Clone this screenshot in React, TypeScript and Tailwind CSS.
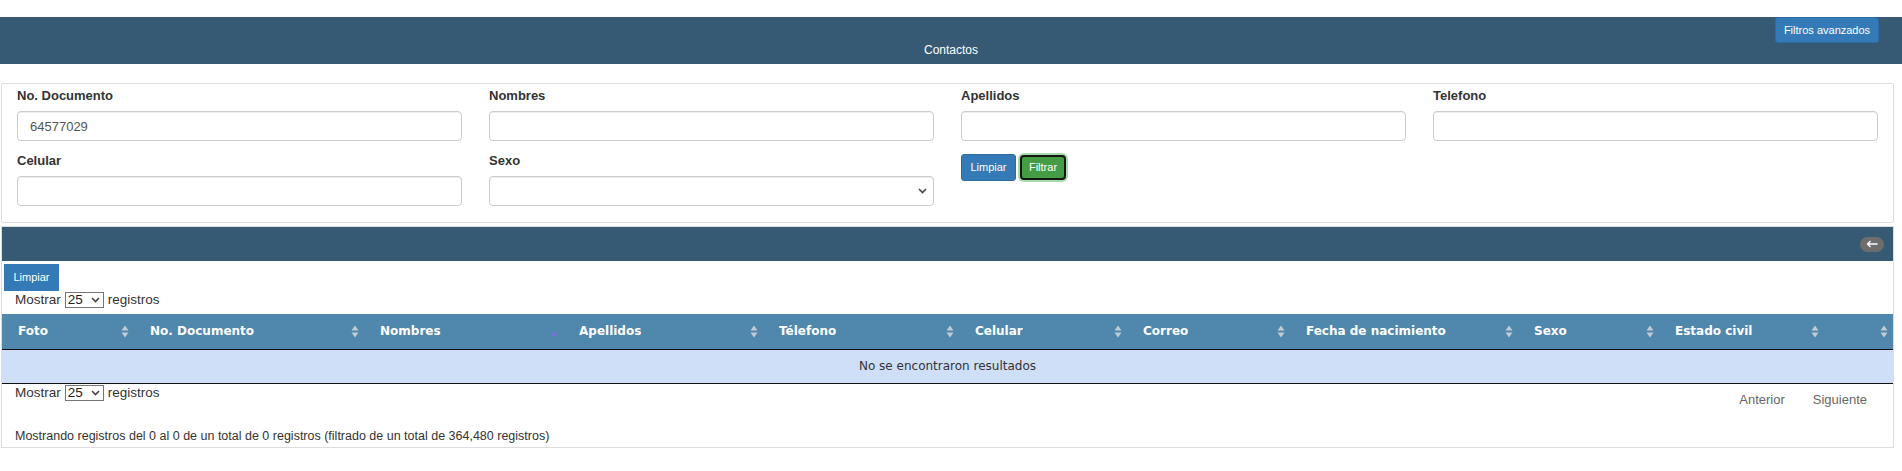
import { useState } from 'react'

const columns = [
  { label: 'Foto', width: 132 },
  { label: 'No. Documento', width: 230 },
  { label: 'Nombres', width: 199, sorted: true },
  { label: 'Apellidos', width: 200 },
  { label: 'Télefono', width: 196 },
  { label: 'Celular', width: 168 },
  { label: 'Correo', width: 163 },
  { label: 'Fecha de nacimiento', width: 228 },
  { label: 'Sexo', width: 141 },
  { label: 'Estado civil', width: 165 },
  { label: '', width: 68 },
]

function SortIcon({ sorted }: { sorted?: boolean }) {
  if (sorted) {
    return (
      <svg width="8" height="13" viewBox="0 0 8 13" className="shrink-0">
        <polygon points="0.5,8 7.5,8 4,12.5" fill="#7d70d9" />
      </svg>
    )
  }
  return (
    <svg width="8" height="13" viewBox="0 0 8 13" className="shrink-0">
      <polygon points="0.5,5.5 4,0.5 7.5,5.5" fill="#c2cad4" />
      <polygon points="0.5,7.5 4,12.5 7.5,7.5" fill="#c2cad4" />
    </svg>
  )
}

function Chevron({ className }: { className: string }) {
  return (
    <svg width="9" height="6" viewBox="0 0 9 6" className={className}>
      <path d="M1 1l3.5 3.5L8 1" fill="none" stroke="#444" strokeWidth="1.6" />
    </svg>
  )
}

function Field({ label, value }: { label: string; value?: string }) {
  const [text, setText] = useState(value ?? '')
  return (
    <label className="block">
      <span className="mb-[8px] block text-[13px] font-bold leading-[15px] text-[#333]">{label}</span>
      <input
        className="block h-[30px] w-full rounded-[4px] border border-[#ccc] px-[12px] text-[13px] text-[#555] shadow-[inset_0_1px_1px_rgba(0,0,0,0.075)] outline-none"
        value={text}
        onChange={(event) => setText(event.target.value)}
      />
    </label>
  )
}

function PageLength() {
  return (
    <div className="flex items-center text-[13.5px] leading-[16px] text-[#333]">
      <span>Mostrar</span>
      <div className="relative mx-[4px]">
        <select className="block h-[16px] w-[39px] appearance-none border border-[#767676] bg-white pl-[2px] text-[13.5px] leading-[14px] text-[#222] outline-none">
          <option>25</option>
          <option>50</option>
          <option>100</option>
        </select>
        <Chevron className="pointer-events-none absolute right-[4px] top-[5px]" />
      </div>
      <span>registros</span>
    </div>
  )
}

export default function App() {
  return (
    <div className="min-h-[471px] bg-white pt-[17px] font-['Liberation_Sans',Arial,sans-serif] text-[#333]">
      <header className="bg-[#365a74] pb-[7px]">
        <div className="flex justify-end pr-[23px]">
          <button className="h-[26px] w-[104px] rounded-[3px] border border-[#2e6da4] bg-[#337ab7] text-[11px] text-white">
            Filtros avanzados
          </button>
        </div>
        <h1 className="text-center text-[12px] leading-[14px] text-white">Contactos</h1>
      </header>

      <div className="pl-[1px] pr-[8px] pt-[19px]">
        <section className="rounded-[2px] border border-[#ddd] px-[15px] pb-[16px] pt-[4px]">
          <div className="grid grid-cols-4 gap-x-[27px] gap-y-[12px]">
            <Field label="No. Documento" value="64577029" />
            <Field label="Nombres" />
            <Field label="Apellidos" />
            <Field label="Telefono" />
            <Field label="Celular" />
            <label className="block">
              <span className="mb-[8px] block text-[13px] font-bold leading-[15px] text-[#333]">Sexo</span>
              <div className="relative">
                <select className="block h-[30px] w-full appearance-none rounded-[4px] border border-[#ccc] bg-white px-[12px] text-[13px] text-[#555] shadow-[inset_0_1px_1px_rgba(0,0,0,0.075)] outline-none">
                  <option></option>
                  <option>Masculino</option>
                  <option>Femenino</option>
                </select>
                <Chevron className="pointer-events-none absolute right-[7px] top-[12px]" />
              </div>
            </label>
            <div className="flex items-start pt-[1px]">
              <button className="h-[27px] w-[55px] rounded-[3px] border border-[#2e6da4] bg-[#337ab7] text-[11px] text-white">
                Limpiar
              </button>
              <button className="ml-[4px] mt-[1px] h-[25px] w-[46px] rounded-[4px] border-2 border-[#151515] bg-[#449d44] text-[11px] text-white ring-2 ring-[#a6dbae]">
                Filtrar
              </button>
            </div>
          </div>
        </section>

        <section className="mt-[3px] border border-[#ddd] pb-[3px]">
          <div className="flex h-[34px] items-center justify-end bg-[#365a74] pr-[9px]">
            <button className="flex h-[15px] w-[24px] items-center justify-center rounded-full bg-[#6d6d6d]">
              <svg width="12" height="8" viewBox="0 0 12 8">
                <path d="M11.5 4H1.5M4.5 1L1.5 4l3 3" fill="none" stroke="#fff" strokeWidth="1.3" />
              </svg>
            </button>
          </div>
          <button className="ml-[2px] mt-[3px] block h-[27px] w-[55px] bg-[#337ab7] text-[11px] text-white">Limpiar</button>
          <div className="pl-[13px] pt-[1px]">
            <PageLength />
          </div>

          <table className="mt-[6px] w-full table-fixed border-collapse font-['DejaVu_Sans',Verdana,sans-serif] text-[12px]">
            <colgroup>
              {columns.map((col, i) => (
                <col key={i} style={i < columns.length - 1 ? { width: col.width } : undefined} />
              ))}
            </colgroup>
            <thead>
              <tr className="bg-[#4f87ad]">
                {columns.map((col, i) => (
                  <th
                    key={i}
                    className="h-[35px] border-b border-[#111] pl-[16px] pr-[5px] text-left font-bold text-white"
                  >
                    <div className="flex items-center justify-between">
                      <span className="truncate">{col.label}</span>
                      <SortIcon sorted={col.sorted} />
                    </div>
                  </th>
                ))}
              </tr>
            </thead>
            <tbody>
              <tr className="bg-[#cfdff7]">
                <td colSpan={columns.length} className="h-[34px] border-b border-[#111] text-center text-[#333]">
                  No se encontraron resultados
                </td>
              </tr>
            </tbody>
          </table>

          <div className="flex items-start justify-between pl-[13px] pt-[1px]">
            <PageLength />
            <div className="flex pr-[13px] pt-[7px] text-[13px] leading-[16px] text-[#666]">
              <span className="px-[13px]">Anterior</span>
              <span className="ml-[2px] px-[13px]">Siguiente</span>
            </div>
          </div>
          <p className="mt-[20px] pl-[13px] text-[12.5px] leading-[16px] text-[#333]">
            Mostrando registros del 0 al 0 de un total de 0 registros (filtrado de un total de 364,480 registros)
          </p>
        </section>
      </div>
    </div>
  )
}
